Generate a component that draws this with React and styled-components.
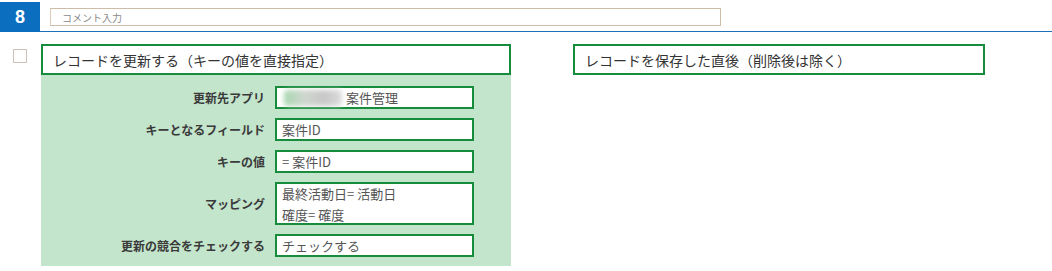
import React from 'react';
import styled, { createGlobalStyle } from 'styled-components';

const GlobalStyle = createGlobalStyle`
  body {
    margin: 0;
    background: #fff;
    font-family: 'Noto Sans CJK JP', 'Noto Sans', sans-serif;
  }
`;

const fields = [
  { label: '更新先アプリ', lines: ['案件管理'], masked: true },
  { label: 'キーとなるフィールド', lines: ['案件ID'] },
  { label: 'キーの値', lines: ['= 案件ID'] },
  { label: 'マッピング', lines: ['最終活動日= 活動日', '確度= 確度'] },
  { label: '更新の競合をチェックする', lines: ['チェックする'] },
];

const App = () => {
  return (
    <Page>
      <GlobalStyle />
      <TopBar>
        <StepNo>8</StepNo>
        <CommentBox>
          <span>コメント入力</span>
        </CommentBox>
      </TopBar>
      <Body>
        <Check />
        <Section $width={470}>
          <Title>レコードを更新する（キーの値を直接指定）</Title>
          <Panel>
            {fields.map((f) => (
              <React.Fragment key={f.label}>
                <Label>{f.label}</Label>
                <Value $multi={f.lines.length > 1}>
                  {f.masked && <Blur />}
                  {f.lines.map((line) => (
                    <Line key={line}>{line}</Line>
                  ))}
                </Value>
              </React.Fragment>
            ))}
          </Panel>
        </Section>
        <Section $width={412} $offset={62}>
          <Title>レコードを保存した直後（削除後は除く）</Title>
        </Section>
      </Body>
    </Page>
  );
};

const Page = styled.div`
  width: 1052px;
  height: 271px;
  overflow: hidden;
  padding-top: 2px;
  box-sizing: border-box;
`;

const TopBar = styled.div`
  display: flex;
  align-items: flex-start;
  height: 29px;
  border-bottom: 1px solid #1d6fb9;
  margin-left: 40px;
`;

const StepNo = styled.div`
  width: 40px;
  height: 30px;
  margin-left: -40px;
  background: #0b6ebf;
  color: #fff;
  font-family: 'Liberation Sans', Arial, sans-serif;
  font-weight: bold;
  font-size: 18px;
  display: flex;
  align-items: center;
  justify-content: center;
`;

const CommentBox = styled.div`
  margin: 6px 0 0 10px;
  width: 671px;
  height: 18px;
  box-sizing: border-box;
  border: 1.5px solid #cdbca8;
  border-left-color: #d8cbbb;
  display: flex;
  align-items: center;
  padding-left: 11px;
  span {
    font-size: 10px;
    color: #8a8a8a;
  }
`;

const Body = styled.div`
  display: flex;
  align-items: flex-start;
  padding: 12px 0 0 13px;
`;

const Check = styled.div`
  width: 14px;
  height: 14px;
  box-sizing: border-box;
  border: 1px solid #cdc1b5;
  margin-top: 5px;
  margin-right: 14px;
  flex-shrink: 0;
`;

const Section = styled.div`
  width: ${(p) => p.$width}px;
  margin-left: ${(p) => p.$offset || 0}px;
  display: flex;
  flex-direction: column;
`;

const Title = styled.div`
  height: 31px;
  box-sizing: border-box;
  border: 2px solid #178c3c;
  padding-left: 10px;
  display: flex;
  align-items: center;
  font-size: 14px;
  color: #333;
`;

const Panel = styled.div`
  background: #c3e5cc;
  display: grid;
  grid-template-columns: 224px 199px;
  column-gap: 10px;
  row-gap: 9px;
  align-items: center;
  padding: 11px 0 9px;
`;

const Label = styled.div`
  text-align: right;
  font-size: 12px;
  font-weight: bold;
  color: #3a3a3a;
  white-space: nowrap;
`;

const Value = styled.div`
  background: #fff;
  border: 2px solid #178c3c;
  box-sizing: border-box;
  min-height: ${(p) => (p.$multi ? 42 : 23)}px;
  padding: ${(p) => (p.$multi ? '1px 5px 0' : '0 5px')};
  display: flex;
  flex-direction: ${(p) => (p.$multi ? 'column' : 'row')};
  justify-content: ${(p) => (p.$multi ? 'center' : 'flex-start')};
  align-items: ${(p) => (p.$multi ? 'flex-start' : 'center')};
  gap: ${(p) => (p.$multi ? 4 : 0)}px;
`;

const Line = styled.div`
  font-size: 13px;
  line-height: 17px;
  color: #555;
  white-space: nowrap;
`;

const Blur = styled.span`
  display: inline-block;
  width: 58px;
  height: 16px;
  margin: 0 4px 0 2px;
  border-radius: 4px;
  background: linear-gradient(90deg, #a8d8ae 0%, #cfd6cf 35%, #c7c7c7 70%, #dcdcdc 100%);
  filter: blur(2.5px);
`;

export default App;
